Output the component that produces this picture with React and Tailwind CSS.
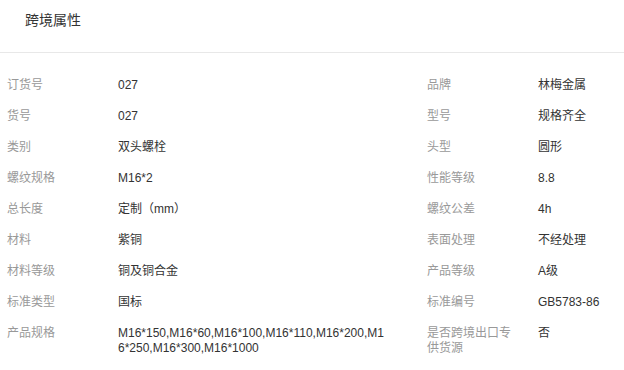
import React from 'react';

const rows = [
  ['订货号', '027', '品牌', '林梅金属'],
  ['货号', '027', '型号', '规格齐全'],
  ['类别', '双头螺栓', '头型', '圆形'],
  ['螺纹规格', 'M16*2', '性能等级', '8.8'],
  ['总长度', '定制（mm）', '螺纹公差', '4h'],
  ['材料', '紫铜', '表面处理', '不经处理'],
  ['材料等级', '铜及铜合金', '产品等级', 'A级'],
  ['标准类型', '国标', '标准编号', 'GB5783-86'],
  ['产品规格', 'M16*150,M16*60,M16*100,M16*110,M16*200,M16*250,M16*300,M16*1000', '是否跨境出口专供货源', '否'],
];

const App = () => {
  return (
    <div
      className="w-[624px] h-[370px] bg-white overflow-hidden"
      style={{ fontFamily: '"Liberation Sans", Arial, "Noto Sans CJK SC", sans-serif' }}
    >
      {/* Header */}
      <div className="h-[53px] border-b border-[#e8e8e8] pl-[25px] pt-[11px]">
        <h2 className="text-[14px] leading-[18px] text-[#333]">跨境属性</h2>
      </div>

      {/* Attributes */}
      <div className="pt-[17px] pl-[7px]">
        {rows.map(([l1, v1, l2, v2]) => (
          <div key={l1} className="flex text-[12px] leading-[15px] py-[8px]">
            <div className="w-[111px] pr-[18px] text-[#999] shrink-0">{l1}</div>
            <div className="w-[309px] pr-[39px] text-[#333] shrink-0 break-all">{v1}</div>
            <div className="w-[111px] pr-[18px] text-[#999] shrink-0">{l2}</div>
            <div className="flex-1 text-[#333] break-all">{v2}</div>
          </div>
        ))}
      </div>
    </div>
  );
};

export default App;
